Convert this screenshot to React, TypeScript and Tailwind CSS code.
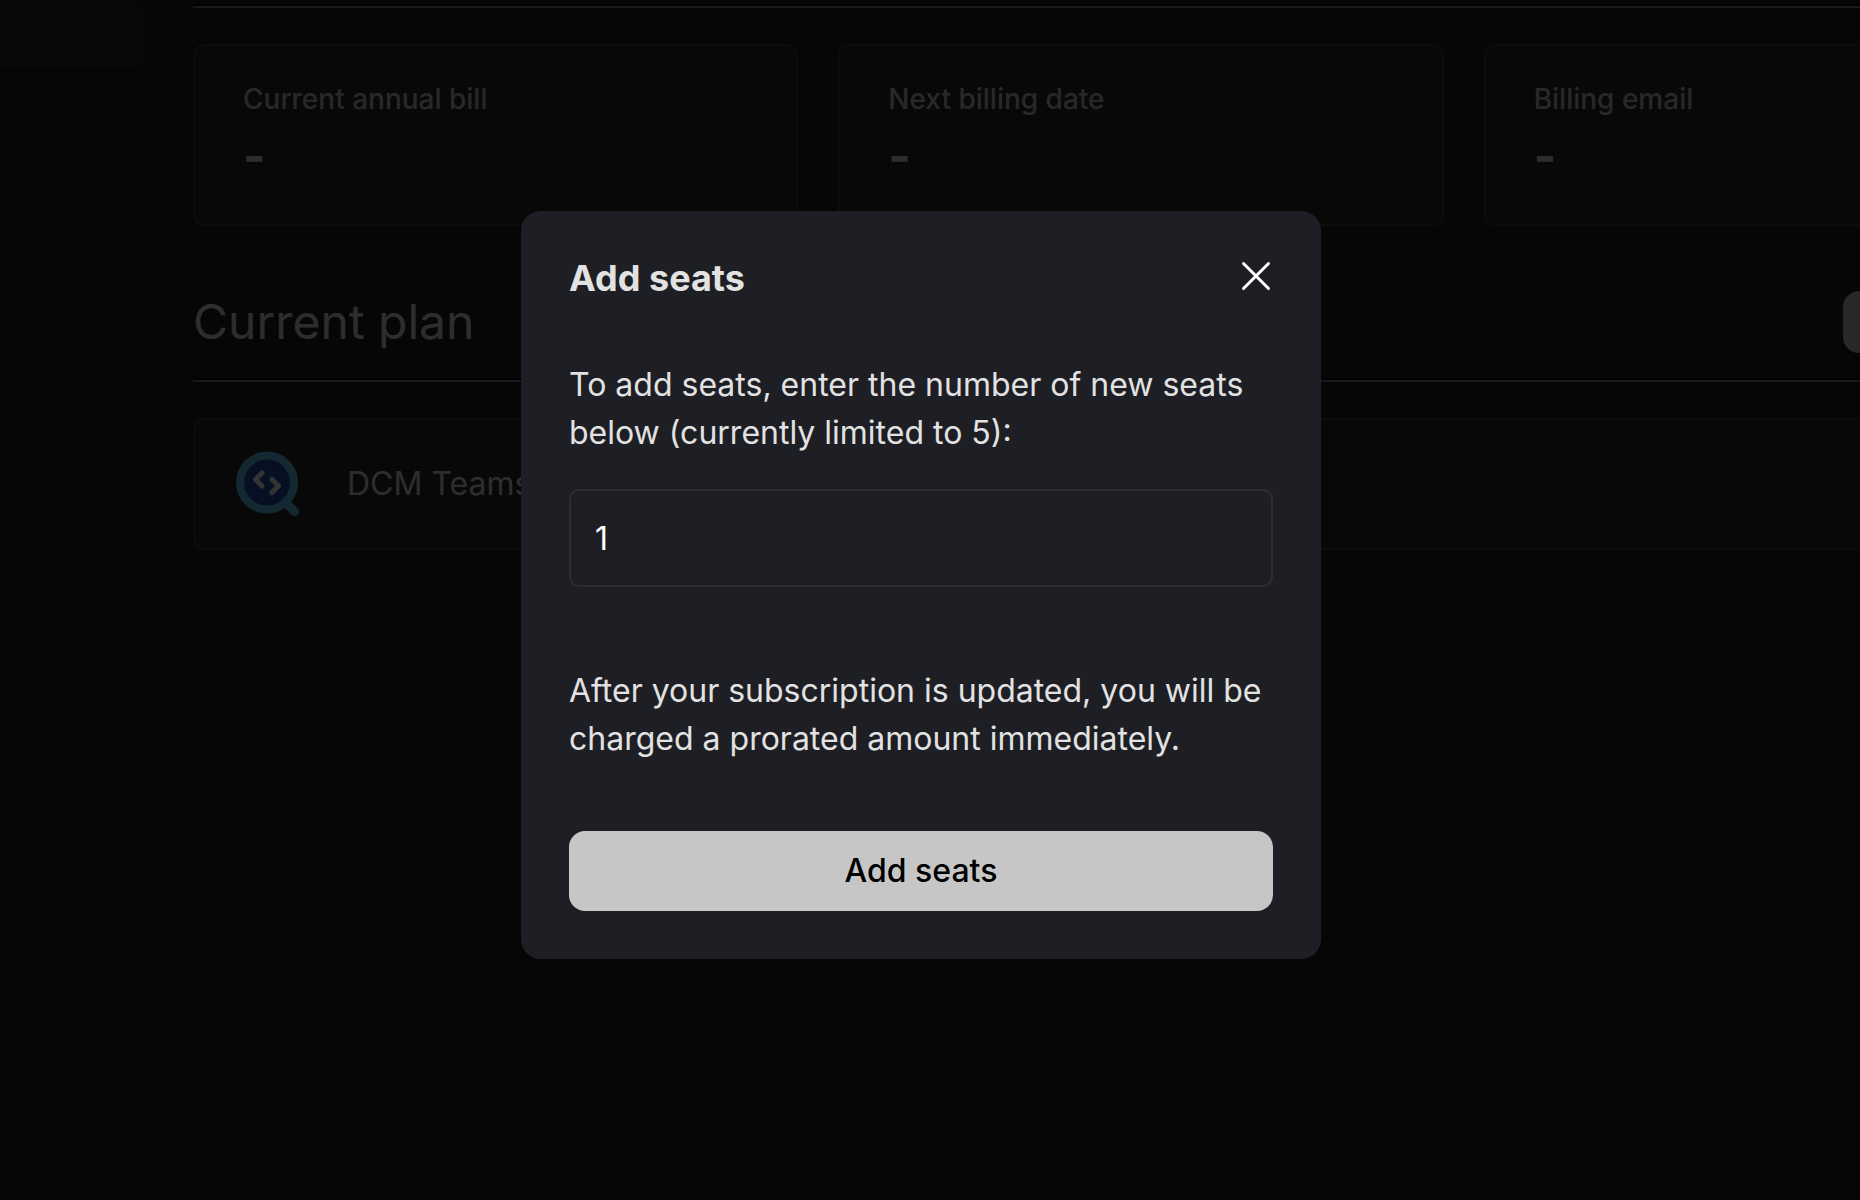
import React, { useState } from 'react';

interface BillingStat {
  label: string;
  value: string;
}

const stats: BillingStat[] = [
  { label: 'Current annual bill', value: '-' },
  { label: 'Next billing date', value: '-' },
  { label: 'Billing email', value: '-' },
];

const DcmLogo: React.FC = () => (
  <svg width="64" height="66" viewBox="0 0 64 66" fill="none" aria-hidden="true">
    <path d="M50 51L59.500 60.500" stroke="#62c8f6" strokeWidth="9" strokeLinecap="round" />
    <circle cx="32" cy="31.500" r="27" fill="#1e50aa" stroke="#62c8f6" strokeWidth="8" />
    <path
      d="M27 22L20.500 28.500L27 35M37 28.500L43.500 35L37 41.500"
      stroke="#ffffff"
      strokeWidth="5"
      strokeLinecap="round"
      strokeLinejoin="round"
    />
  </svg>
);

const Divider: React.FC = () => (
  <hr className="h-1 border-t-2 border-b-2 border-t-black border-b-[#7d788c]" />
);

interface AddSeatsModalProps {
  isOpen: boolean;
  onClose: () => void;
}

const AddSeatsModal: React.FC<AddSeatsModalProps> = ({ isOpen, onClose }) => {
  const [seats, setSeats] = useState('1');

  if (!isOpen) return null;

  const handleSubmit = (e: React.FormEvent) => {
    e.preventDefault();
    onClose();
  };

  return (
    <div className="fixed inset-0 bg-black/80 flex items-center justify-center z-50 pr-[18px] pb-[30px]">
      <div
        role="dialog"
        aria-modal="true"
        aria-labelledby="add-seats-title"
        className="bg-[#1e1f24] rounded-[20px] w-full max-w-[800px] p-12"
      >
        <div className="flex items-start justify-between">
          <h3 id="add-seats-title" className="text-[36px] leading-[38px] font-bold text-[#e2e2e2]">
            Add seats
          </h3>
          <button type="button" onClick={onClose} aria-label="Close modal" className="text-white">
            <svg width="34" height="34" viewBox="0 0 34 34" fill="none" aria-hidden="true">
              <path d="M4.500 4.500L29.500 29.500M29.500 4.500L4.500 29.500" stroke="currentColor" strokeWidth="3" strokeLinecap="round" />
            </svg>
          </button>
        </div>

        <form onSubmit={handleSubmit} className="mt-16 text-[32px] leading-[48px] text-[#e2e2e2]">
          <label htmlFor="seats" className="block">
            To add seats, enter the number of new seats below (currently limited to 5):
          </label>
          <input
            id="seats"
            type="text"
            inputMode="numeric"
            value={seats}
            onChange={(e) => setSeats(e.target.value)}
            className="mt-8 w-full h-[98px] px-6 bg-transparent border-2 border-[#2d2e32] rounded-[10px] text-white outline-none"
          />
          <p className="mt-20">
            After your subscription is updated, you will be charged a prorated amount immediately.
          </p>
          <button
            type="submit"
            className="mt-[68px] w-full h-20 rounded-2xl bg-[#c6c6c6] text-black font-medium"
          >
            Add seats
          </button>
        </form>
      </div>
    </div>
  );
};

const App: React.FC = () => {
  const [isModalOpen, setIsModalOpen] = useState(true);

  return (
    <div className="flex h-screen overflow-hidden bg-[#1e1e1e] font-['Inter',sans-serif] text-[#e2e2e2]">
      <aside className="w-[145px] shrink-0 pt-0.5">
        <div className="h-[66px] rounded-r-xl bg-[#23282d]" />
      </aside>

      <main className="ml-12 w-[1896px] shrink-0 pt-1">
        <Divider />
        <div className="mt-9 grid grid-cols-3 gap-10">
          {stats.map((stat) => (
            <div key={stat.label} className="h-[182px] px-12 pt-8 bg-[#282828] border-2 border-[#3c3c3c] rounded-xl">
              <p className="text-[28px] leading-[42px] font-medium text-[#c8c8c8]">{stat.label}</p>
              <p className="mt-2 text-[48px] leading-[56px] font-bold">{stat.value}</p>
            </div>
          ))}
        </div>

        <div className="mt-[65px] flex items-center justify-between">
          <h2 className="text-[48px] leading-[62px]">Current plan</h2>
          <button
            type="button"
            aria-label="Add seats"
            onClick={() => setIsModalOpen(true)}
            className="h-[62px] w-[246px] rounded-2xl bg-[#c8c8c8]"
          />
        </div>
        <div className="mt-[25px]">
          <Divider />
        </div>
        <div className="mt-9 flex h-[132px] items-center gap-12 pl-10 bg-[#282828] border-2 border-[#3c3c3c] rounded-xl">
          <DcmLogo />
          <p className="text-[32px] leading-[48px]">DCM Teams</p>
        </div>
      </main>

      <AddSeatsModal isOpen={isModalOpen} onClose={() => setIsModalOpen(false)} />
    </div>
  );
};

export default App;
